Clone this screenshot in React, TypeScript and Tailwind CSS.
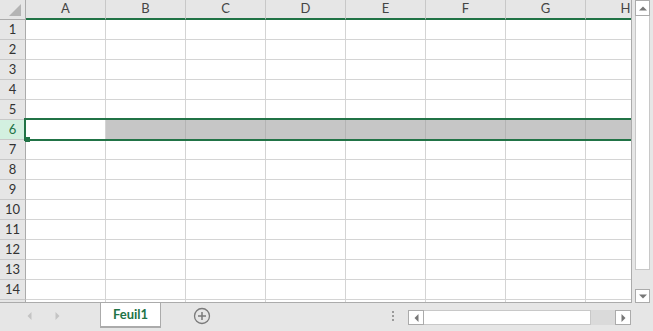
const columns = ["A", "B", "C", "D", "E", "F", "G", "H"];
const rows = Array.from({ length: 15 }, (_, i) => i + 1);

const GREEN = "border-[#217346]";

const Corner = () => (
  <div className="w-[26px] h-[20px] shrink-0 border-r border-b border-[#ababab] bg-[#e6e6e6]">
    <svg width="25" height="19" className="block">
      <polygon points="9,16 21,16 21,4" fill="#b4b4b4" />
    </svg>
  </div>
);

const ColumnHeader = ({ letter }: { letter: string }) => (
  <div
    className={`w-[80px] h-[20px] shrink-0 flex items-center justify-center bg-[#e6e6e6] border-r border-r-[#c8c8c8] border-b-2 ${GREEN} text-[13px] text-[#444]`}
  >
    {letter}
  </div>
);

const Row = ({ n }: { n: number }) => {
  const selected = n === 6;
  // row 15 only peeks out by two pixels, its number stays hidden
  const label = n < 15 ? n : "";
  return (
    <div className="flex h-[20px]">
      <div
        className={`w-[26px] shrink-0 flex items-center justify-center border-r border-b border-r-[#ababab] border-b-[#c8c8c8] text-[13px] ${
          selected ? "bg-[#d3f0e0] text-[#217346]" : "bg-[#e6e6e6] text-[#333]"
        }`}
      >
        {label}
      </div>
      {columns.map((c, i) => (
        <div
          key={c}
          className={`w-[80px] shrink-0 border-r border-b ${
            selected && i > 0 ? "bg-[#c6c6c6] border-[#b4b4b4]" : "bg-white border-[#d4d4d4]"
          }`}
        />
      ))}
    </div>
  );
};

const VerticalScrollbar = () => (
  <div className="w-[21px] h-[303px] bg-[#e6e6e6] px-[3px] flex flex-col">
    <div className="h-[16px] bg-white border border-[#ababab] flex items-center justify-center">
      <svg width="8" height="5"><polygon points="0,4.5 8,4.5 4,0.5" fill="#777" /></svg>
    </div>
    <div className="h-[254px] bg-white border-x border-b border-[#c8c8c8]" />
    <div className="flex-1" />
    <div className="h-[14px] bg-white border border-[#ababab] flex items-center justify-center">
      <svg width="8" height="5"><polygon points="0,0.5 8,0.5 4,4.5" fill="#777" /></svg>
    </div>
  </div>
);

const HorizontalScrollbar = () => (
  <div className="w-[223px] h-[15px] flex">
    <div className="w-[16px] bg-white border border-[#ababab] flex items-center justify-center">
      <svg width="5" height="8"><polygon points="4.5,0 4.5,8 0.5,4" fill="#777" /></svg>
    </div>
    <div className="w-[167px] bg-white border-y border-r border-[#c8c8c8]" />
    <div className="flex-1 bg-[#dadada]" />
    <div className="w-[16px] bg-white border border-[#ababab] flex items-center justify-center">
      <svg width="5" height="8"><polygon points="0.5,0 0.5,8 4.5,4" fill="#777" /></svg>
    </div>
  </div>
);

const SheetBar = () => (
  <div className="h-[28px] bg-[#e6e6e6] flex items-start">
    <div className="w-[100px] h-[26px] flex items-center">
      <svg width="5" height="8" className="ml-[27px]"><polygon points="4.5,0 4.5,8 0.5,4" fill="#c4c4c4" /></svg>
      <svg width="5" height="8" className="ml-[23px]"><polygon points="0.5,0 0.5,8 4.5,4" fill="#c4c4c4" /></svg>
    </div>
    <div className={`w-[61px] h-[25px] bg-white border-x border-[#ababab] border-b-2 ${GREEN} flex items-center justify-center text-[13px] font-bold text-[#217346]`}>
      Feuil1
    </div>
    <div className="h-[26px] flex items-center ml-[32px]">
      <svg width="18" height="18">
        <circle cx="9" cy="9" r="7.5" fill="none" stroke="#7a7a7a" strokeWidth="1.3" />
        <path d="M9 5v8M5 9h8" stroke="#7a7a7a" strokeWidth="1.5" />
      </svg>
    </div>
    <div className="h-[26px] flex flex-col justify-center gap-[2px] ml-[181px]">
      <div className="w-[2px] h-[2px] bg-[#9a9a9a]" />
      <div className="w-[2px] h-[2px] bg-[#9a9a9a]" />
      <div className="w-[2px] h-[2px] bg-[#9a9a9a]" />
    </div>
    <div className="ml-[14px] mt-[7px]">
      <HorizontalScrollbar />
    </div>
  </div>
);

export default function App() {
  return (
    <div className="w-[653px] h-[331px] bg-[#e6e6e6] flex flex-col overflow-hidden" style={{ fontFamily: "Lato, 'Open Sans', sans-serif" }}>
      <div className="flex">
        <div className="w-[632px] h-[303px] shrink-0 border-r border-b border-[#ababab] overflow-hidden relative bg-white">
          <div className="flex h-[20px]">
            <Corner />
            {columns.map((c) => (
              <ColumnHeader key={c} letter={c} />
            ))}
          </div>
          {rows.map((n) => (
            <Row key={n} n={n} />
          ))}
          {/* selection frame over row 6 */}
          <div className={`absolute left-[24px] top-[118px] w-[640px] h-[23px] border-2 ${GREEN}`} />
          <div className="absolute left-[25px] top-[137px] w-[5px] h-[5px] bg-[#217346]" />
        </div>
        <VerticalScrollbar />
      </div>
      <SheetBar />
    </div>
  );
}
